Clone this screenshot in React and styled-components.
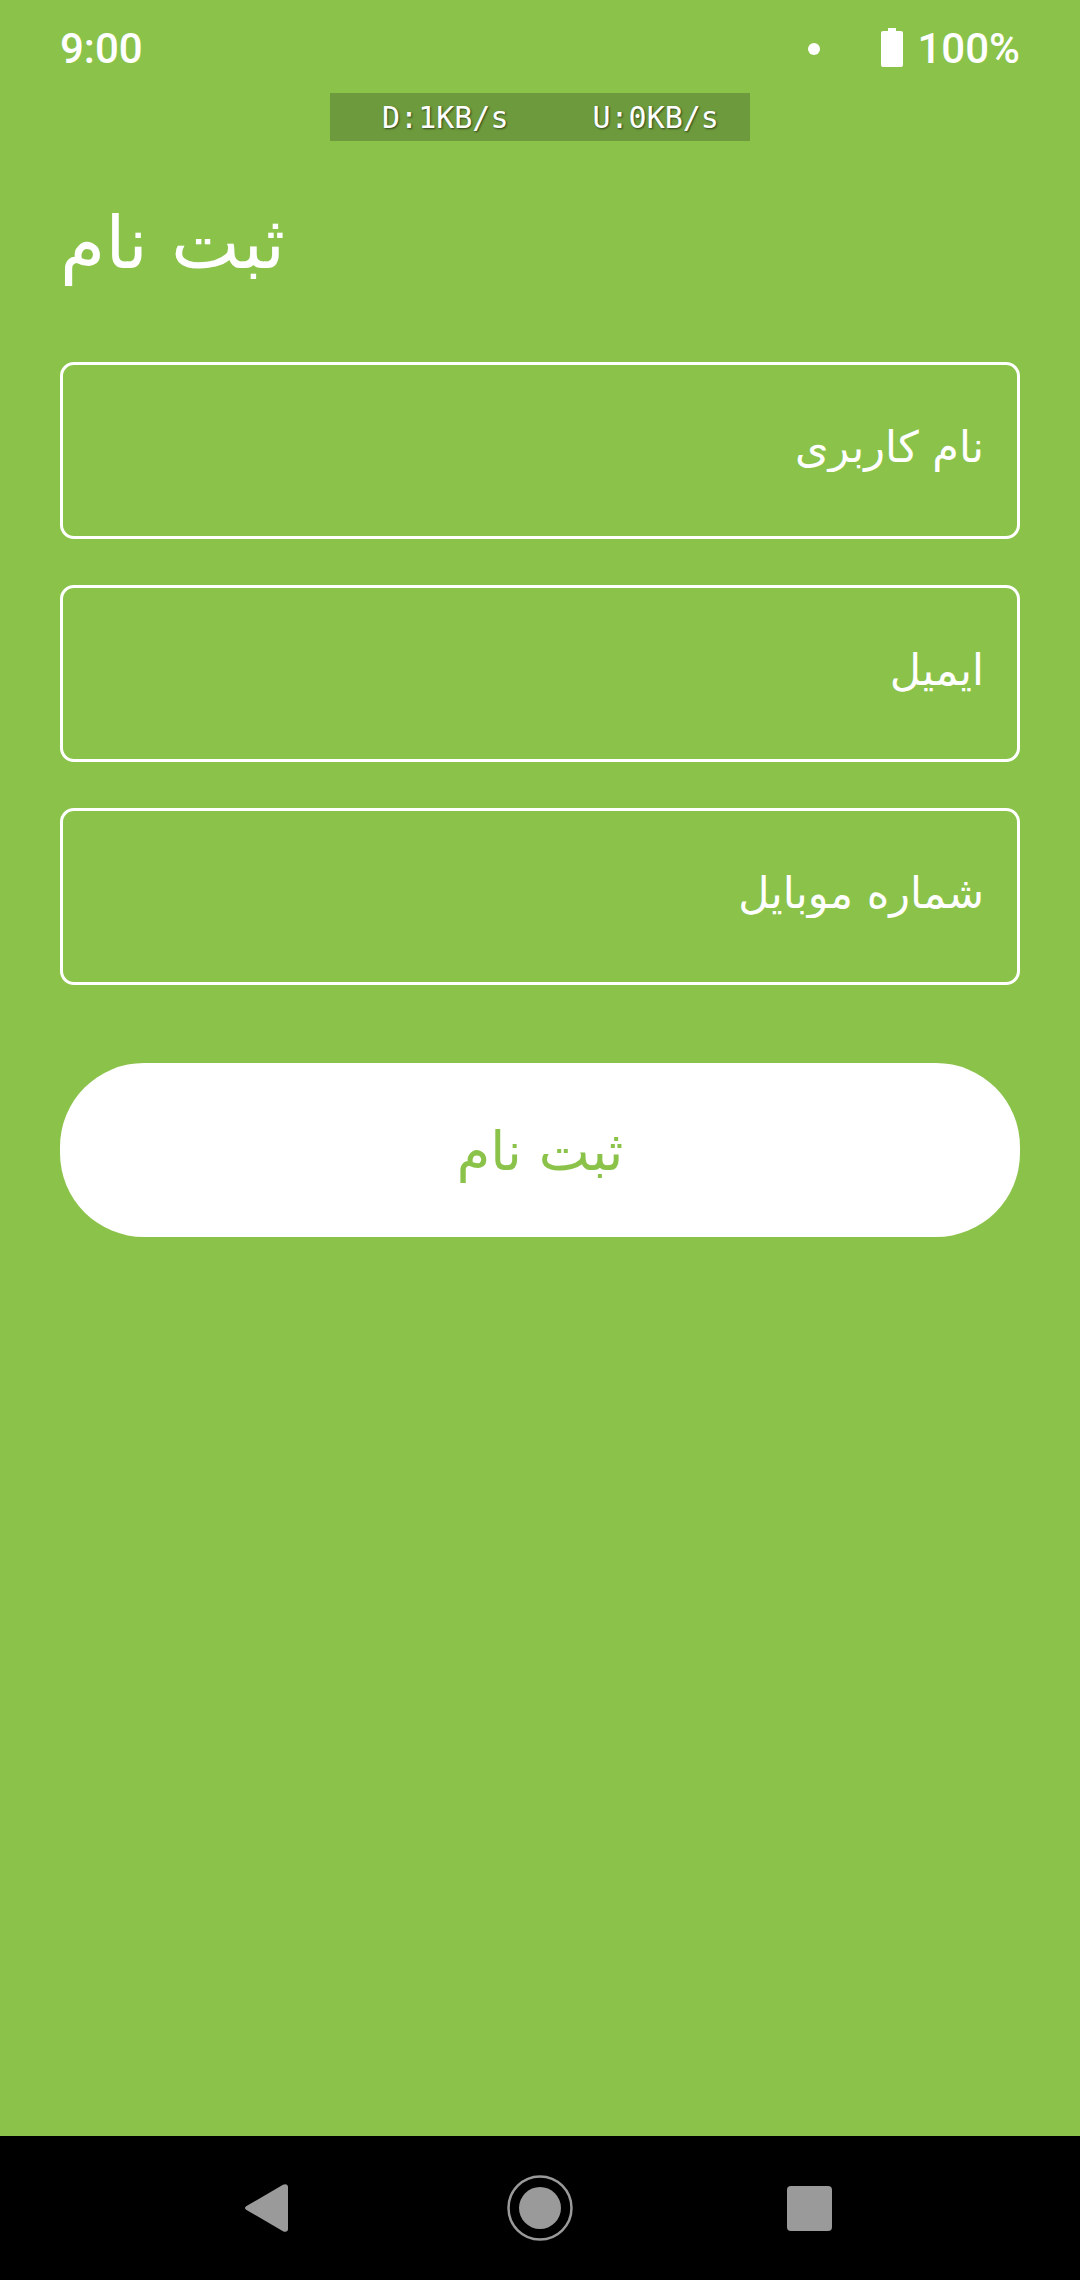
import React from "react";
import styled, { createGlobalStyle } from "styled-components";

const GREEN = "#8bc34a";

const Global = createGlobalStyle`
    html, body { margin: 0; padding: 0; background: ${GREEN}; }
    * { box-sizing: border-box; }
    input::placeholder { color: #fff; opacity: 1; }
`

const Screen = styled.div`
    width: 1080px;
    height: 2280px;
    display: flex;
    flex-direction: column;
    background: ${GREEN};
    font-family: "DejaVu Sans", sans-serif;
    overflow: hidden;
`

const StatusBar = styled.header`
    height: 93px;
    flex: none;
    display: flex;
    align-items: center;
    padding: 4px 60px 0;
    color: #fff;
    font-family: Roboto, sans-serif;
    font-weight: 500;
    font-size: 42px;
`

const Time = styled.span`
    flex: 1;
`

const Dot = styled.i`
    width: 12px;
    height: 12px;
    border-radius: 50%;
    background: #fff;
    margin-right: 61px;
`

const Battery = styled.svg`
    width: 22px;
    height: 39px;
    margin: 0 14px 3px 0;
`

const SpeedBar = styled.div`
    align-self: center;
    width: 420px;
    height: 48px;
    flex: none;
    display: flex;
    justify-content: center;
    align-items: center;
    gap: 84px;
    padding-left: 21px;
    background: #6c9a3c;
    color: #fff;
    font-family: "DejaVu Sans Mono", monospace;
    font-size: 30px;
    text-shadow: 1px 1px 2px rgba(0, 0, 0, 0.55);
`

const Title = styled.h1`
    margin: 52px 0 0;
    padding: 0 60px;
    height: 122px;
    font-size: 73px;
    font-weight: 400;
    line-height: 100px;
    color: #fff;
    text-align: left;
`

const Form = styled.form`
    display: flex;
    flex-direction: column;
    gap: 46px;
    padding: 0 60px;
    margin-top: 47px;
`

const Field = styled.input`
    width: 100%;
    height: 177px;
    border: 3px solid #fff;
    border-radius: 14px;
    background: transparent;
    outline: none;
    padding: 0 33px 8px;
    font-family: "DejaVu Sans", sans-serif;
    font-size: 43px;
    color: #fff;
    text-align: right;
`

const SubmitButton = styled.button`
    height: 174px;
    margin-top: 32px;
    border: none;
    border-radius: 84px;
    background: #fff;
    color: ${GREEN};
    font-family: "DejaVu Sans", sans-serif;
    font-size: 54px;
    padding: 2px 0 0;
`

const Spacer = styled.div`
    flex: 1;
`

const NavBar = styled.nav`
    height: 144px;
    flex: none;
    background: #000;
    display: flex;
    align-items: center;
    padding-left: 245px;
`

const NavIcon = styled.svg`
    display: block;
    margin-right: ${p => p.$gap}px;
    fill: #9a9a9a;
`

export default function App() {
    return (
        <Screen>
            <Global />
            <StatusBar>
                <Time>9:00</Time>
                <Dot />
                <Battery viewBox="0 0 22 39">
                    <path d="M7 0h8v3h5a2 2 0 0 1 2 2v32a2 2 0 0 1-2 2H2a2 2 0 0 1-2-2V5a2 2 0 0 1 2-2h5z" fill="#fff" />
                </Battery>
                <span>100%</span>
            </StatusBar>
            <SpeedBar>
                <span>D:1KB/s</span>
                <span>U:0KB/s</span>
            </SpeedBar>
            <Title>ثبت نام</Title>
            <Form>
                <Field dir="rtl" placeholder="نام کاربری" />
                <Field dir="rtl" placeholder="ایمیل" />
                <Field dir="rtl" placeholder="شماره موبایل" />
                <SubmitButton type="button">ثبت نام</SubmitButton>
            </Form>
            <Spacer />
            <NavBar>
                <NavIcon $gap={219} width="43" height="48" viewBox="0 0 43 48">
                    <path d="M1.5 22 38 .8C40.5-.6 43 .5 43 3v42c0 2.500-2.500 3.600-5 2.200L1.500 26c-2-1.300-2-2.700 0-4z" />
                </NavIcon>
                <NavIcon $gap={214} width="66" height="66" viewBox="0 0 66 66">
                    <circle cx="33" cy="33" r="31.500" fill="none" stroke="#9a9a9a" strokeWidth="2.500" />
                    <circle cx="33" cy="33" r="21" />
                </NavIcon>
                <NavIcon $gap={0} width="45" height="45" viewBox="0 0 45 45">
                    <rect width="45" height="45" rx="4" />
                </NavIcon>
            </NavBar>
        </Screen>
    )
}
